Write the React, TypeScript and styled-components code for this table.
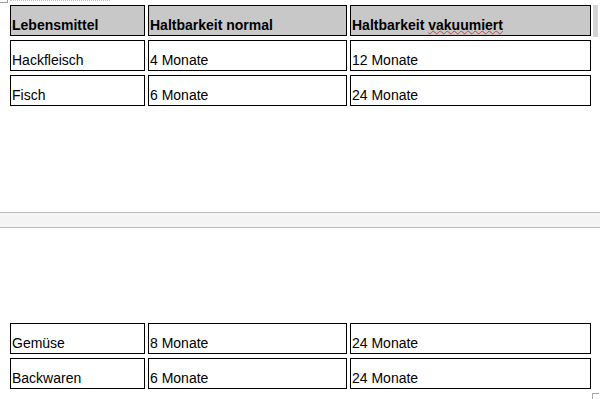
import React from 'react';
import styled, { createGlobalStyle } from 'styled-components';

type Row = { food: string; normal: string; vacuum: string };

const firstPage: Row[] = [
  { food: 'Hackfleisch', normal: '4 Monate', vacuum: '12 Monate' },
  { food: 'Fisch', normal: '6 Monate', vacuum: '24 Monate' },
];

const secondPage: Row[] = [
  { food: 'Gemüse', normal: '8 Monate', vacuum: '24 Monate' },
  { food: 'Backwaren', normal: '6 Monate', vacuum: '24 Monate' },
];

const GlobalStyle = createGlobalStyle`
  html, body {
    margin: 0;
    padding: 0;
    background: #fff;
  }
  body {
    width: 600px;
    height: 399px;
    overflow: hidden;
    font-family: "Liberation Sans", Arial, sans-serif;
    color: #000;
  }
`;

const Document = styled.div`
  position: relative;
  display: flex;
  flex-direction: column;
  width: 600px;
  height: 399px;
`;

const Page = styled.section<{ $top: number; $height: number }>`
  height: ${p => p.$height}px;
  box-sizing: border-box;
  padding: ${p => p.$top}px 0 0 10px;
  display: flex;
  flex-direction: column;
`;

const PageGap = styled.div`
  height: 16px;
  box-sizing: border-box;
  background: #f4f4f4;
  border-top: 1px solid #bebebe;
  border-bottom: 1px solid #bebebe;
`;

const Table = styled.div`
  display: grid;
  grid-template-columns: 135px 199px 241px;
  grid-auto-rows: 31px;
  column-gap: 3px;
  row-gap: 4px;
  position: relative;
`;

const Cell = styled.div<{ $head?: boolean }>`
  box-sizing: border-box;
  border: 1px solid #000;
  background: ${p => (p.$head ? '#c8c8c8' : '#fff')};
  font-size: 14px;
  line-height: 16px;
  font-weight: ${p => (p.$head ? 700 : 400)};
  display: flex;
  align-items: flex-end;
  padding: 0 0 2px 1px;
  white-space: nowrap;
`;

/* spell-check squiggle under an unknown word */
const Misspelled = styled.span`
  text-decoration: underline wavy #d23c3c;
  text-decoration-thickness: 1px;
  text-underline-offset: 0;
`;

const RowEnd = styled.div`
  position: absolute;
  left: 583px;
  top: 0;
  width: 5px;
  height: 32px;
  background: #d3d3d3;
`;

const CornerTop = styled.div`
  position: absolute;
  left: 0;
  top: 0;
  width: 7px;
  height: 2px;
  border-bottom: 1px solid #9a9a9a;
  border-right: 1px solid #9a9a9a;
  &::after {
    content: '';
    position: absolute;
    left: 10px;
    top: 0;
    width: 100px;
    border-top: 1px dotted #c4c4c4;
  }
`;

const CornerBottom = styled.div`
  position: absolute;
  left: 592px;
  top: 393px;
  width: 6px;
  height: 6px;
  border-top: 1px solid #a8a8a8;
  border-left: 1px solid #a8a8a8;
`;

const BodyRow = ({ row }: { row: Row }) => (
  <>
    <Cell>{row.food}</Cell>
    <Cell>{row.normal}</Cell>
    <Cell>{row.vacuum}</Cell>
  </>
);

export default function App() {
  return (
    <Document>
      <GlobalStyle />
      <CornerTop />
      <Page $top={5} $height={212}>
        <Table>
          <Cell $head>Lebensmittel</Cell>
          <Cell $head>Haltbarkeit normal</Cell>
          <Cell $head>
            Haltbarkeit&nbsp;<Misspelled>vakuumiert</Misspelled>
          </Cell>
          <RowEnd />
          {firstPage.map(r => (
            <BodyRow key={r.food} row={r} />
          ))}
        </Table>
      </Page>
      <PageGap />
      <Page $top={95} $height={171}>
        <Table>
          {secondPage.map(r => (
            <BodyRow key={r.food} row={r} />
          ))}
        </Table>
      </Page>
      <CornerBottom />
    </Document>
  );
}
